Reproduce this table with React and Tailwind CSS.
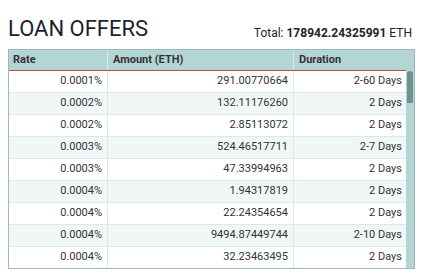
import React from "react";

const rows = [
  ["0.0001%", "291.00770664", "2-60 Days"],
  ["0.0002%", "132.11176260", "2 Days"],
  ["0.0002%", "2.85113072", "2 Days"],
  ["0.0003%", "524.46517711", "2-7 Days"],
  ["0.0003%", "47.33994963", "2 Days"],
  ["0.0004%", "1.94317819", "2 Days"],
  ["0.0004%", "22.24354654", "2 Days"],
  ["0.0004%", "9494.87449744", "2-10 Days"],
  ["0.0004%", "32.23463495", "2 Days"],
];

export default function App() {
  return (
    <div
      className="w-[421px] h-[278px] bg-white px-2 text-[#333]"
      style={{ fontFamily: "Roboto, 'Liberation Sans', sans-serif" }}
    >
      <div className="flex items-end justify-between h-[44px] pb-[5px]">
        <div className="text-[22px] leading-none text-[#1f1f2e] -mb-[1px]">LOAN OFFERS</div>
        <div className="text-[12px] leading-none text-[#222] mr-[1px]">
          Total: <span className="font-bold">178942.24325991</span> ETH
        </div>
      </div>
      <div className="mt-[5px] w-[407px] border border-[#9fb8b8] flex">
        <div className="flex-1">
          <div className="flex h-[21px] bg-[#b3d5d5] border-b border-[#d0443c] text-[11px] font-bold text-[#333]">
            <div className="w-[99px] pl-[4px] flex items-center border-r border-[#d6e6e6]">Rate</div>
            <div className="w-[186px] pl-[5px] flex items-center border-r border-[#d6e6e6]">Amount (ETH)</div>
            <div className="flex-1 pl-[5px] flex items-center">Duration</div>
          </div>
          {rows.map((r, i) => (
            <div
              key={i}
              className={`flex text-[11px] text-[#333] ${i % 2 === 1 ? "bg-[#f1f6f6]" : "bg-white"} ${i < rows.length - 1 ? "h-[22px] border-b border-[#dbe9e9]" : "h-[21px]"}`}
            >
              <div className="w-[99px] pr-[5px] flex items-center justify-end border-r border-[#dbe9e9]">{r[0]}</div>
              <div className="w-[186px] pr-[5px] flex items-center justify-end border-r border-[#dbe9e9]">{r[1]}</div>
              <div className="flex-1 pr-[4px] flex items-center justify-end">{r[2]}</div>
            </div>
          ))}
        </div>
        <div className="w-[8px] bg-[#b3d5d5] pt-[21px]">
          <div className="w-[6px] ml-[1px] h-[32px] bg-[#6f9191] rounded-t-[3px] rounded-b-[1px]"></div>
        </div>
      </div>
    </div>
  );
}
